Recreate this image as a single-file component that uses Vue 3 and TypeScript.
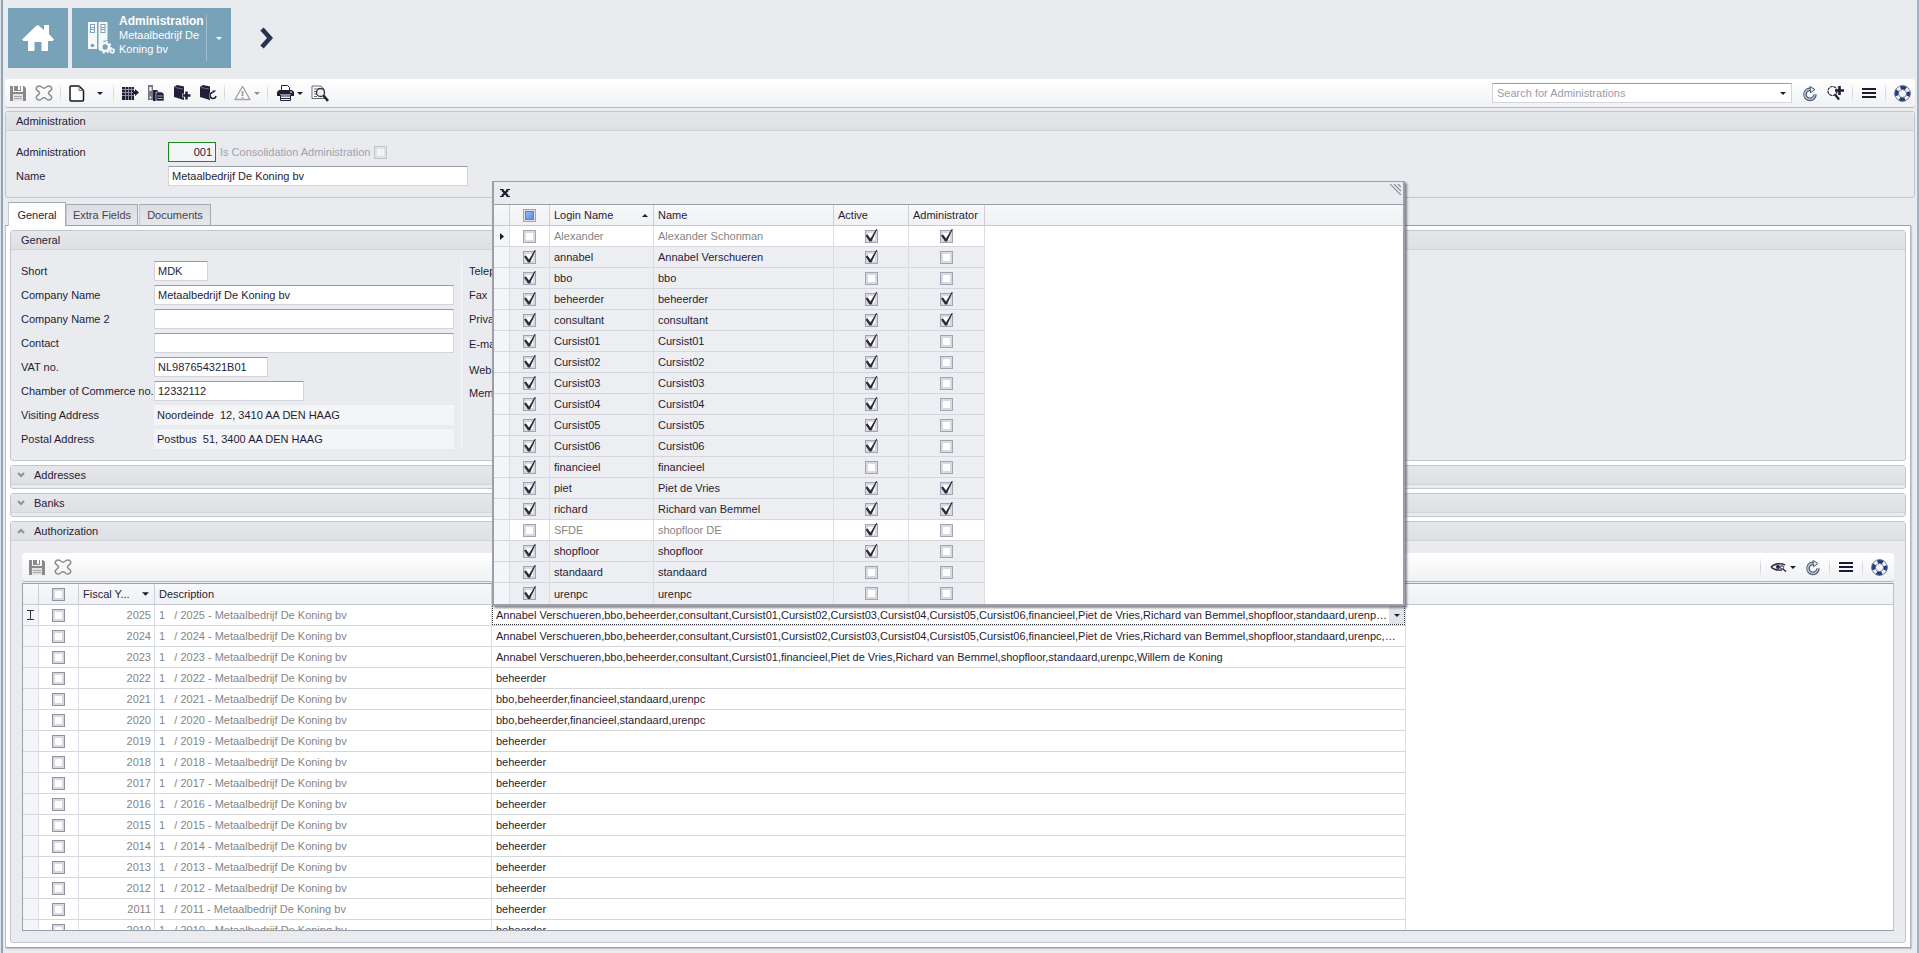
<script setup lang="ts">
import { ref } from 'vue'

interface Login {
  login: string
  name: string
  selected: boolean
  active: boolean
  admin: boolean
}

interface FiscalYear {
  year: number
  users: string
}

interface Field {
  id: string
  label: string
  value: string
  size: string
}

const login = (login: string, name: string, selected: boolean, active: boolean, admin: boolean): Login => ({
  login,
  name,
  selected,
  active,
  admin,
})

const logins = ref<Login[]>([
  login('Alexander', 'Alexander Schonman', false, true, true),
  login('annabel', 'Annabel Verschueren', true, true, false),
  login('bbo', 'bbo', true, false, false),
  login('beheerder', 'beheerder', true, true, true),
  login('consultant', 'consultant', true, true, true),
  login('Cursist01', 'Cursist01', true, true, false),
  login('Cursist02', 'Cursist02', true, true, false),
  login('Cursist03', 'Cursist03', true, true, false),
  login('Cursist04', 'Cursist04', true, true, false),
  login('Cursist05', 'Cursist05', true, true, false),
  login('Cursist06', 'Cursist06', true, true, false),
  login('financieel', 'financieel', true, false, false),
  login('piet', 'Piet de Vries', true, true, true),
  login('richard', 'Richard van Bemmel', true, true, true),
  login('SFDE', 'shopfloor DE', false, true, false),
  login('shopfloor', 'shopfloor', true, true, false),
  login('standaard', 'standaard', true, false, false),
  login('urenpc', 'urenpc', true, false, false),
])

const everyone =
  'Annabel Verschueren,bbo,beheerder,consultant,Cursist01,Cursist02,Cursist03,Cursist04,Cursist05,Cursist06,financieel,Piet de Vries,Richard van Bemmel,shopfloor,standaard,urenpc,Willem de Koning'
const office = 'bbo,beheerder,financieel,standaard,urenpc'

const usersByYear: Record<number, string> = {
  2025: everyone,
  2024: everyone,
  2023:
    'Annabel Verschueren,bbo,beheerder,consultant,Cursist01,financieel,Piet de Vries,Richard van Bemmel,shopfloor,standaard,urenpc,Willem de Koning',
  2021: office,
  2020: office,
}

const years: FiscalYear[] = Array.from({ length: 16 }, (_, i) => {
  const year = 2025 - i
  return { year, users: usersByYear[year] ?? 'beheerder' }
})

const fields = ref<Field[]>([
  { id: 'short', label: 'Short', value: 'MDK', size: 'w-short' },
  { id: 'company', label: 'Company Name', value: 'Metaalbedrijf De Koning bv', size: 'w-full' },
  { id: 'company2', label: 'Company Name 2', value: '', size: 'w-full' },
  { id: 'contact', label: 'Contact', value: '', size: 'w-full' },
  { id: 'vat', label: 'VAT no.', value: 'NL987654321B01', size: 'w-vat' },
  { id: 'coc', label: 'Chamber of Commerce no.', value: '12332112', size: 'w-coc' },
  { id: 'visiting', label: 'Visiting Address', value: 'Noordeinde  12, 3410 AA DEN HAAG', size: 'w-full flat' },
  { id: 'postal', label: 'Postal Address', value: 'Postbus  51, 3400 AA DEN HAAG', size: 'w-full flat' },
])

const contactLabels = ['Telephone', 'Fax', 'Private', 'E-mail', 'Website', 'Memo']
</script>

<template>
  <div class="app">
    <svg class="sprite" aria-hidden="true">
      <symbol id="i-save" viewBox="0 0 16 16">
        <path fill="#8a8a8a" d="M0 1h3v6h10V1h1l2 2v13H0z" />
        <path fill="#8a8a8a" d="M4 1h7v5H4z" /><path fill="#fff" d="M8 1h2v4H8z" />
        <path fill="#e2e2e2" d="M3 9h10v7H3z" /><path fill="#a8a8a8" d="M4 11h8v1H4zM4 13h8v1H4z" />
      </symbol>
      <symbol id="i-cancel" viewBox="0 0 18 16">
        <path
          fill="none"
          stroke="#8c8c8c"
          stroke-width="1.500"
          stroke-linejoin="round"
          d="M4.500 1C6 1 7.200 3.200 9 3.200S12 1 13.500 1C15.700 1 17.200 2.600 16.700 4.200C16.300 5.600 13.400 6.500 13.400 8S16.300 10.400 16.700 11.800C17.200 13.400 15.700 15 13.500 15C12 15 10.800 12.800 9 12.800S6 15 4.500 15C2.300 15 .8 13.400 1.300 11.800C1.700 10.400 4.600 9.500 4.600 8S1.700 5.600 1.300 4.200C.8 2.600 2.300 1 4.500 1Z"
        />
      </symbol>
      <symbol id="i-refresh" viewBox="0 0 16 17">
        <path fill="none" stroke="#4f5d73" stroke-width="3.600" d="M9 4.500A5 5 0 1 0 13 9.500" />
        <path fill="none" stroke="#c3cbd6" stroke-width="1.300" d="M9 4.500A5 5 0 1 0 12.800 10" />
        <path fill="#dfe4ea" stroke="#4f5d73" d="M8 1.500L13 4.500L8.500 7.800Z" />
      </symbol>
      <symbol id="i-menu" viewBox="0 0 16 12">
        <path fill="#1b1a33" d="M1 1h14v2H1zM1 5h14v2H1zM1 9h14v2H1z" />
      </symbol>
      <symbol id="i-help" viewBox="0 0 17 17">
        <circle cx="8.500" cy="8.500" r="6" fill="none" stroke="#f1f3f7" stroke-width="4" />
        <circle
          cx="8.500"
          cy="8.500"
          r="6"
          fill="none"
          stroke="#263a70"
          stroke-width="4"
          stroke-dasharray="5.600 3.825"
          stroke-dashoffset="2.800"
        />
        <circle cx="8.500" cy="8.500" r="7.800" fill="none" stroke="#64719a" stroke-width=".9" />
        <circle cx="8.500" cy="8.500" r="4" fill="none" stroke="#64719a" stroke-width=".8" />
      </symbol>
      <symbol id="i-caret" viewBox="0 0 6 3"><path fill="currentColor" d="M0 0h6L3 3z" /></symbol>
    </svg>

    <header class="tiles">
      <button class="tile home" aria-label="Home">
        <svg width="32" height="28" viewBox="0 0 32 28">
          <path fill="#fff" d="M16 1L22 6V1h5v9l5 5.500l-1.500 1.500H26V27h-6.500v-9h-7v9H6V17H1.500L0 15.500L14 2Z" />
        </svg>
      </button>
      <button class="tile admin">
        <svg width="28" height="32" viewBox="0 0 28 32">
          <path fill="#f4f8fa" d="M1 0h9v27H1zM11.500 0h9v18l-5 1v8h-4z" />
          <path fill="#78a2b8" d="M3 2h5v9H3zM13.500 2h5v9h-5z" />
          <path fill="#fff" d="M4 3h3v2H4zM4 6h3v1H4zM4 8h3v2H4zM14.500 3h3v2h-3zM14.500 6h3v1h-3zM14.500 8h3v2h-3z" />
          <circle cx="5.500" cy="23.500" r="1.800" fill="#78a2b8" />
          <circle cx="18" cy="25" r="4" fill="none" stroke="#f4f8fa" stroke-width="2.600" />
          <circle cx="18" cy="25" r="5.700" fill="none" stroke="#f4f8fa" stroke-width="1.800" stroke-dasharray="2.200 2.270" />
          <circle cx="25.200" cy="28.800" r="1.800" fill="none" stroke="#f4f8fa" stroke-width="1.500" />
          <circle cx="25.200" cy="28.800" r="2.700" fill="none" stroke="#f4f8fa" stroke-dasharray="1.400 1.420" />
        </svg>
        <span class="tile-text"><strong>Administration</strong><br />Metaalbedrijf De<br />Koning bv</span>
        <span class="tile-caret"><svg width="6" height="3"><use href="#i-caret" /></svg></span>
      </button>
      <button class="next" aria-label="Next">
        <svg width="14" height="22" viewBox="0 0 14 22">
          <path fill="none" stroke="#25344f" stroke-width="4.500" d="M2 2L10 11L2 20" />
        </svg>
      </button>
    </header>

    <nav class="toolbar">
      <button class="tb" aria-label="Save"><svg width="16" height="16"><use href="#i-save" /></svg></button>
      <button class="tb" aria-label="Cancel"><svg width="18" height="16"><use href="#i-cancel" /></svg></button>
      <span class="sep"></span>
      <button class="tb" aria-label="New">
        <svg width="16" height="17" viewBox="0 0 16 17">
          <path fill="#fff" stroke="#15151f" stroke-width="1.500" stroke-linejoin="round" d="M2 1h8l4.500 4.500V15a1 1 0 0 1-1 1H2a1 1 0 0 1-1-1V2a1 1 0 0 1 1-1z" />
          <path fill="none" stroke="#777" d="M10 1v4.500h4.500" />
        </svg>
      </button>
      <button class="tb narrow" aria-label="New options"><svg width="6" height="3"><use href="#i-caret" /></svg></button>
      <span class="sep"></span>
      <button class="tb" aria-label="Move columns">
        <svg width="17" height="15" viewBox="0 0 17 15">
          <path fill="#201f38" d="M0 1h12v13H0z" />
          <path stroke="#fff" d="M0 3.500h12M0 6.500h12M0 9.500h12M3.500 1v13M6.500 1v13M9.500 1v13" opacity=".5" />
          <path fill="#201f38" d="M11 5h2V3l4 3.500L13 10V8h-2z" />
        </svg>
      </button>
      <button class="tb" aria-label="Copy administration">
        <svg width="16" height="16" viewBox="0 0 16 16">
          <path fill="#777687" d="M0 0h5v15H0z" /><path fill="#fff" d="M1.500 2h2v4h-2zM6 4h3v3H6z" />
          <path fill="#201f38" d="M5 5h4l2 2v9H5z" /><path fill="#201f38" d="M8 7h6l2 2v7H8z" stroke="#fff" stroke-width=".6" />
          <path stroke="#a8a8b8" d="M9.500 11h5M9.500 13.500h5" /><circle cx="2.500" cy="12.500" r="1" fill="#fff" />
        </svg>
      </button>
      <button class="tb" aria-label="Add ledger">
        <svg width="17" height="16" viewBox="0 0 17 16">
          <path fill="#201f38" d="M0 2L3 0L10 1.500V15L0 12z" /><path stroke="#8886a0" stroke-width=".8" d="M1 2.500L9 4" />
          <path stroke="#fff" stroke-width="3.600" d="M12.500 6v9M8 10.500h9" /><path stroke="#201f38" stroke-width="2.600" d="M12.500 6.500v8M8.500 10.500h8" />
        </svg>
      </button>
      <button class="tb" aria-label="Refresh ledger">
        <svg width="17" height="16" viewBox="0 0 17 16">
          <path fill="#201f38" d="M0 2L3 0L10 1.500V15L0 12z" /><path stroke="#8886a0" stroke-width=".8" d="M1 2.500L9 4" />
          <circle cx="13" cy="10.500" r="4" fill="#f8f8fa" />
          <path fill="none" stroke="#201f38" stroke-width="1.500" d="M12.500 7.500A3 3 0 1 0 16 11" /><path fill="#201f38" d="M12.500 8.500V5.500h4z" />
        </svg>
      </button>
      <span class="sep"></span>
      <button class="tb split muted" aria-label="Warnings">
        <svg width="17" height="16" viewBox="0 0 17 16">
          <path fill="#fff" stroke="#a3a3a3" stroke-width="1.400" stroke-linejoin="round" d="M8.500 1.500L16 14.500H1z" />
          <path fill="#a3a3a3" d="M7.500 6h2v5h-2zM7.500 12h2v1.500h-2z" />
        </svg>
        <svg width="6" height="3"><use href="#i-caret" /></svg>
      </button>
      <span class="sep"></span>
      <button class="tb split" aria-label="Print">
        <svg width="17" height="16" viewBox="0 0 17 16">
          <path fill="#fff" stroke="#201f38" d="M4.500 5V.5h6l2 2V5" />
          <path fill="#201f38" d="M2 5h13l2 2v4h-3v-1.500H3V11H0V7zM4 10.500h9v1H4zM4 13h9v1H4z" />
          <path fill="none" stroke="#201f38" d="M3.500 10v5.500h10V10" /><path fill="#fff" d="M13 6.500h2v1h-2z" />
        </svg>
        <svg width="6" height="3"><use href="#i-caret" /></svg>
      </button>
      <button class="tb" aria-label="Preview">
        <svg width="18" height="17" viewBox="0 0 18 17">
          <path fill="#fff" stroke="#6a6a74" d="M1 1h9l3 3v9.500H1z" /><path stroke="#6a6a74" d="M3 4h5M3 6.500h3M3 9h3M3 11.500h3" />
          <circle cx="9.500" cy="7.500" r="4" fill="#eef0f3" stroke="#33333f" stroke-width="1.300" />
          <path stroke="#201f38" stroke-width="2.500" d="M12.500 10.500L17 16" />
        </svg>
      </button>
      <div class="search">
        <input type="text" aria-label="Search for Administrations" placeholder="Search for Administrations" />
        <button aria-label="Search options"><svg width="6" height="3"><use href="#i-caret" /></svg></button>
      </div>
      <button class="tb" aria-label="Refresh"><svg width="16" height="17"><use href="#i-refresh" /></svg></button>
      <button class="tb" aria-label="Advanced search">
        <svg width="18" height="16" viewBox="0 0 18 16">
          <circle cx="5.500" cy="6" r="4.500" fill="#fff" stroke="#2d2c40" stroke-width="1.200" stroke-dasharray="3 .6" />
          <path stroke="#201f38" stroke-width="2.200" d="M8 9.500L12 14.500" />
          <path stroke="#201f38" stroke-width="2.600" d="M12.500 1v9M8 5.500h9" />
        </svg>
      </button>
      <span class="sep"></span>
      <button class="tb" aria-label="Menu"><svg width="16" height="12"><use href="#i-menu" /></svg></button>
      <span class="sep"></span>
      <button class="tb" aria-label="Help"><svg width="17" height="17"><use href="#i-help" /></svg></button>
    </nav>

    <section class="group identity">
      <h2 class="group-title">Administration</h2>
      <div class="group-body">
        <div class="row">
          <label for="adm-no">Administration</label>
          <input id="adm-no" class="box code" type="text" value="001" />
          <label class="inline-label" for="consolidation">Is Consolidation Administration</label>
          <input id="consolidation" class="check soft" type="checkbox" disabled />
        </div>
        <div class="row">
          <label for="adm-name">Name</label>
          <input id="adm-name" class="box w-full" type="text" value="Metaalbedrijf De Koning bv" />
        </div>
      </div>
    </section>

    <div class="tabs" role="tablist">
      <button class="tab active" role="tab" aria-selected="true">General</button>
      <button class="tab" role="tab" aria-selected="false">Extra Fields</button>
      <button class="tab" role="tab" aria-selected="false">Documents</button>
    </div>

    <main class="page">
      <section class="group general">
        <h2 class="group-title">General</h2>
        <div class="group-body columns">
          <div class="column">
            <div v-for="f in fields" :key="f.id" class="row">
              <label :for="f.id">{{ f.label }}</label>
              <input :id="f.id" v-model="f.value" class="box" :class="f.size" type="text" />
            </div>
          </div>
          <div class="column second">
            <div v-for="c in contactLabels" :key="c" class="contact-label">{{ c }}</div>
          </div>
        </div>
      </section>

      <section v-for="name in ['Addresses', 'Banks']" :key="name" class="group collapsed">
        <h2 class="group-title">
          <button class="expander">
            <svg width="8" height="6" viewBox="0 0 8 6"><path fill="none" stroke="#8d919c" stroke-width="2" d="M1 1L4 4L7 1" /></svg>
            {{ name }}
          </button>
        </h2>
      </section>

      <section class="group authorization">
        <h2 class="group-title">
          <button class="expander">
            <svg width="8" height="6" viewBox="0 0 8 6"><path fill="none" stroke="#8d919c" stroke-width="2" d="M1 5L4 2L7 5" /></svg>
            Authorization
          </button>
        </h2>
        <div class="authorization-body">
          <nav class="toolbar inner">
            <button class="tb" aria-label="Save rows"><svg width="16" height="16"><use href="#i-save" /></svg></button>
            <button class="tb" aria-label="Cancel rows"><svg width="18" height="16"><use href="#i-cancel" /></svg></button>
            <span class="spacer"></span>
            <span class="sep"></span>
            <button class="tb split" aria-label="View">
              <svg width="17" height="10" viewBox="0 0 17 10">
                <path fill="#b9b9c6" stroke="#2b2a45" stroke-width="1.400" d="M1 5C4 1.500 10 .5 15 3M1 5C4 8 8 8.500 12 8" />
                <circle cx="8" cy="5" r="2" fill="#2b2a45" /><circle cx="12" cy="5.500" r="1.600" fill="none" stroke="#2b2a45" />
                <path stroke="#2b2a45" stroke-width="1.500" d="M13 7L16 9.500" />
              </svg>
              <svg width="6" height="3"><use href="#i-caret" /></svg>
            </button>
            <button class="tb" aria-label="Refresh rows"><svg width="16" height="17"><use href="#i-refresh" /></svg></button>
            <span class="sep"></span>
            <button class="tb" aria-label="Grid menu"><svg width="16" height="12"><use href="#i-menu" /></svg></button>
            <span class="sep"></span>
            <button class="tb" aria-label="Grid help"><svg width="17" height="17"><use href="#i-help" /></svg></button>
          </nav>

          <div class="grid years">
            <table>
              <colgroup>
                <col class="c-mark" /><col class="c-check" /><col class="c-year" /><col class="c-desc" /><col class="c-users" /><col />
              </colgroup>
              <thead>
                <tr>
                  <th></th>
                  <th class="mid"><input class="check dark" type="checkbox" aria-label="Select all years" /></th>
                  <th>
                    <span class="sorted">Fiscal Y...<svg width="7" height="4" viewBox="0 0 6 3"><path fill="#1b1a33" d="M0 0h6L3 3z" /></svg></span>
                  </th>
                  <th>Description</th>
                  <th class="open"></th>
                  <th class="rest"></th>
                </tr>
              </thead>
              <tbody>
                <tr v-for="(y, i) in years" :key="y.year">
                  <td class="mark">
                    <svg v-if="i === 0" width="7" height="10" viewBox="0 0 7 10">
                      <path fill="none" stroke="#33333f" d="M0 .5h7M0 9.500h7M3.500 0v10" />
                    </svg>
                  </td>
                  <td class="mid"><input class="check dark" type="checkbox" :aria-label="`Select ${y.year}`" /></td>
                  <td class="num grey">{{ y.year }}</td>
                  <td class="grey pre">{{ `1   / ${y.year} - Metaalbedrijf De Koning bv` }}</td>
                  <td v-if="i === 0" class="edit-cell">
                    <div class="editor">
                      <input type="text" readonly :value="y.users" aria-label="Users 2025" />
                      <button aria-label="Choose users"><svg width="6" height="3"><use href="#i-caret" /></svg></button>
                    </div>
                  </td>
                  <td v-else>{{ y.users }}</td>
                  <td class="rest"></td>
                </tr>
              </tbody>
            </table>
          </div>
        </div>
      </section>
    </main>

    <div class="popup" role="dialog" aria-label="Choose users">
      <div class="popup-bar">
        <button class="popup-close" aria-label="Close">
          <svg width="10" height="8" viewBox="0 0 10 8">
            <path fill="none" stroke="#1b1a33" stroke-width="2.200" d="M2 1L8 7M8 1L2 7" />
            <path fill="none" stroke="#1b1a33" d="M0 .5h3.500M6.500 .5H10M0 7.500h3.500M6.500 7.500H10" />
          </svg>
        </button>
        <svg class="grip" width="11" height="11" viewBox="0 0 11 11">
          <path fill="none" stroke="#8b8e98" stroke-width="1.200" d="M0 0L11 11M4 0L11 7M8 0L11 3" />
        </svg>
      </div>
      <div class="grid logins">
        <table>
          <colgroup>
            <col class="c-mark" /><col class="c-check" /><col class="c-login" /><col class="c-name" /><col class="c-active" /><col
              class="c-admin"
            /><col />
          </colgroup>
          <thead>
            <tr>
              <th></th>
              <th class="mid"><input class="check partial" type="checkbox" aria-label="Select all users" /></th>
              <th>
                <span class="sorted">Login Name<svg width="6" height="3" viewBox="0 0 6 3"><path fill="#1b1a33" d="M0 3h6L3 0z" /></svg></span>
              </th>
              <th>Name</th>
              <th>Active</th>
              <th>Administrator</th>
              <th class="rest"></th>
            </tr>
          </thead>
          <tbody>
            <tr v-for="(u, i) in logins" :key="u.login" :class="{ selected: u.selected }">
              <td class="mark">
                <svg v-if="i === 0" width="4" height="7" viewBox="0 0 4 7"><path fill="#1b1a33" d="M0 0L4 3.500L0 7z" /></svg>
              </td>
              <td class="mid"><input v-model="u.selected" class="check" type="checkbox" :aria-label="`Select ${u.login}`" /></td>
              <td :class="{ grey: !u.selected }">{{ u.login }}</td>
              <td :class="{ grey: !u.selected }">{{ u.name }}</td>
              <td class="mid"><input v-model="u.active" class="check" type="checkbox" :aria-label="`${u.login} active`" /></td>
              <td class="mid"><input v-model="u.admin" class="check" type="checkbox" :aria-label="`${u.login} administrator`" /></td>
              <td class="rest"></td>
            </tr>
          </tbody>
        </table>
      </div>
    </div>
  </div>
</template>

<style>
body {
  background: #eaebef;
}
</style>

<style scoped>
.app {
  position: relative;
  display: flex;
  flex-direction: column;
  box-sizing: border-box;
  height: 100vh;
  padding: 0 4px 5px 5px;
  overflow: hidden;
  background: #eaebef;
  box-shadow: inset 1px 0 #dfe4ea, inset 3px 0 #8fa4b5, inset -2px 0 #a3b1c0;
  color: #1f1d36;
  font: 11px/14px 'Liberation Sans', Arial, sans-serif;
}
.sprite {
  display: none;
}
button,
input {
  box-sizing: border-box;
  margin: 0;
  padding: 0;
  border: 0;
  color: inherit;
  background: none;
  font: inherit;
}
svg {
  display: block;
  flex: none;
}

/* Navigation tiles */
.tiles {
  display: flex;
  flex: none;
  align-items: center;
  gap: 4px;
  height: 60px;
  padding: 8px 3px 11px;
}
.tile {
  display: flex;
  align-items: center;
  height: 60px;
  background: #78a2b8;
  color: #fff;
}
.home {
  justify-content: center;
  width: 60px;
}
.admin {
  width: 159px;
  padding-left: 15px;
  text-align: left;
}
.tile-text {
  flex: 1;
  margin-left: 4px;
  padding-bottom: 6px;
  white-space: nowrap;
}
.tile-text strong {
  font-size: 12px;
}
.tile-caret {
  display: flex;
  align-items: center;
  justify-content: center;
  width: 24px;
  height: 46px;
  border-left: 1px solid #a5c1cf;
}
.next {
  margin-left: 21px;
  padding: 4px;
}

/* Toolbars */
.toolbar {
  display: flex;
  flex: none;
  align-items: center;
  height: 28px;
  border-bottom: 1px solid #b3b7c0;
  border-radius: 3px;
  background: linear-gradient(#fff, #f0f1f4);
}
.toolbar.inner {
  padding: 0 2px;
}
.tb {
  display: flex;
  align-items: center;
  justify-content: center;
  width: 26px;
  height: 24px;
}
.tb.narrow {
  width: 20px;
}
.tb.split {
  justify-content: flex-start;
  gap: 3px;
  width: 36px;
  padding-left: 6px;
}
.muted {
  color: #8c8c8c;
}
.sep {
  width: 1px;
  height: 19px;
  margin: 0 3px;
  background: linear-gradient(#f4f4f6, #cfd1d7, #f0f0f3);
}
.spacer {
  flex: 1;
}
.search {
  display: flex;
  box-sizing: border-box;
  width: 300px;
  height: 20px;
  margin: 0 5px 0 auto;
  border: 1px solid #d3d5dc;
  border-top-color: #9a9caa;
  background: #fff;
}
.search input {
  flex: 1;
  min-width: 0;
  padding-left: 4px;
}
.search input::placeholder {
  color: #9a9ca8;
  opacity: 1;
}
.search button {
  display: flex;
  align-items: center;
  justify-content: center;
  width: 16px;
}

/* Groups and form fields */
.group {
  flex: none;
  border: 1px solid #c3c6ce;
  border-radius: 3px;
  background: #eaebef;
}
.group-title {
  display: flex;
  align-items: center;
  height: 18px;
  margin: 0;
  padding-left: 10px;
  border-bottom: 1px solid #d2d4da;
  background: linear-gradient(#e6e7eb, #dfe0e4);
  font: inherit;
}
.expander {
  display: flex;
  align-items: center;
  gap: 9px;
}
.collapsed .group-title,
.authorization > .group-title {
  padding-left: 6px;
}
.collapsed {
  padding-bottom: 3px;
}
.group-body {
  padding: 9px 10px;
}
.row {
  display: flex;
  align-items: center;
  height: 24px;
}
.row > label:first-child {
  flex: none;
  width: 133px;
  white-space: nowrap;
}
.identity {
  margin-top: 3px;
}
.identity .row > label:first-child {
  width: 152px;
}
.box {
  height: 20px;
  padding: 0 3px;
  border: 1px solid #d3d5dc;
  border-top-color: #9a9caa;
  background: #fff;
}
.box.flat {
  border-color: #f4f5f7;
  background: #f4f5f7;
  padding-left: 2px;
}
.box.code {
  width: 48px;
  border-color: #1d8a1d;
  background: #f4f5f7;
  text-align: right;
}
.w-short {
  width: 54px;
}
.w-vat {
  width: 114px;
}
.w-coc {
  width: 150px;
}
.w-full {
  width: 300px;
}
.inline-label {
  margin: 0 4px;
  color: #a0a2ae;
}

/* Tabs */
.tabs {
  display: flex;
  flex: none;
  align-items: flex-end;
  height: 23px;
  margin-top: 4px;
  padding-left: 3px;
}
.tab {
  width: 72px;
  height: 21px;
  border: 1px solid #a6a8b4;
  border-bottom: 0;
  border-left-color: #c9cbd2;
  background: linear-gradient(#dddee3, #e6e7eb);
  color: #44434f;
}
.tab + .tab {
  margin-right: 1px;
}
.tab.active {
  position: relative;
  z-index: 1;
  width: 58px;
  height: 24px;
  margin-bottom: -1px;
  background: #fff;
  color: inherit;
}
.page {
  display: flex;
  flex: 1;
  flex-direction: column;
  gap: 4px;
  min-height: 0;
  margin-right: 4px;
  padding: 4px;
  border: 1px solid #9c9eaa;
  border-left-color: #c0c2ca;
  border-right-color: #b4b6c0;
  background: #fff;
  box-shadow: 1px 1px 1px #c6c8ce;
}
.columns {
  display: flex;
}
.second {
  display: flex;
  flex-direction: column;
  margin-left: 7px;
  padding-left: 7px;
  border-left: 1px solid #f6f6f9;
}
.contact-label {
  height: 24px;
  line-height: 24px;
}
.contact-label:nth-child(n + 4) {
  height: 26px;
  line-height: 26px;
}
.contact-label:nth-child(6) {
  height: 20px;
  line-height: 20px;
}
.authorization {
  display: flex;
  flex: 1;
  flex-direction: column;
  min-height: 0;
}
.authorization-body {
  display: flex;
  flex: 1;
  flex-direction: column;
  min-height: 0;
  padding: 12px 11px 11px;
}

/* Grids */
.grid {
  overflow: hidden;
  background: #fff;
}
.years {
  flex: 1;
  min-height: 0;
  margin-top: 1px;
  border: 1px solid #9c9eaa;
  border-right-color: #c0c2cc;
}
table {
  width: 100%;
  table-layout: fixed;
  border-collapse: separate;
  border-spacing: 0;
}
th,
td {
  box-sizing: border-box;
  height: 21px;
  padding: 0 4px;
  overflow: hidden;
  border-right: 1px solid #dcdde3;
  border-bottom: 1px solid #d6d7dd;
  font-weight: 400;
  line-height: 18px;
  text-align: left;
  text-overflow: ellipsis;
  white-space: nowrap;
}
th {
  border-right-color: #cdced8;
  border-bottom-color: #c6c8d2;
  background: linear-gradient(#f7f8f9, #f0f1f4);
}
th.open,
th.rest {
  border-right: 0;
}
td.rest {
  border: 0;
}
td:first-child {
  background: #f4f5f8;
}
.c-mark {
  width: 16px;
}
.c-check {
  width: 40px;
}
.c-year {
  width: 76px;
}
.c-desc {
  width: 337px;
}
.c-users {
  width: 914px;
}
.c-login {
  width: 104px;
}
.c-name {
  width: 180px;
}
.c-active {
  width: 75px;
}
.c-admin {
  width: 76px;
}
.mid,
.mark {
  padding: 0;
  text-align: center;
}
.mid .check {
  margin: 0 auto;
}
.mark svg {
  margin: 0 auto;
}
.num {
  text-align: right;
  padding-right: 3px;
}
.grey {
  color: #858585;
}
.pre {
  white-space: pre;
}
.sorted {
  display: flex;
  align-items: center;
  justify-content: space-between;
  padding-right: 1px;
}
.selected td {
  background: #edeef1;
}
.selected td:first-child {
  background: #f4f5f8;
}
.selected td.rest {
  background: #fff;
}
.edit-cell {
  padding: 0;
}
.editor {
  display: flex;
  box-sizing: border-box;
  height: 20px;
  border: 1px dotted #33333f;
}
.editor input {
  flex: 1;
  min-width: 0;
  padding: 0 1px 0 3px;
  text-overflow: ellipsis;
}
.editor button {
  display: flex;
  align-items: center;
  justify-content: center;
  width: 15px;
  background: #e2e3e8;
}

/* Check boxes */
.check {
  position: relative;
  display: block;
  width: 13px;
  height: 13px;
  border: 1px solid #a2a4b1;
  background: #fff;
  box-shadow: inset 0 0 0 2px #d9dae0;
  appearance: none;
}
.check.dark {
  border-color: #8f919e;
}
.check.soft {
  border-color: #c4c6cd;
  background: #f3f3f6;
  box-shadow: inset 0 0 0 2px #e0e1e6;
}
.check.partial {
  background: linear-gradient(135deg, #a9c4f8, #4f7fe0);
  box-shadow: inset 0 0 0 1px #dfe3ee, inset 0 0 0 2px #5b7fd0;
}
.check:checked::before {
  position: absolute;
  top: -2px;
  left: 0;
  width: 12px;
  height: 14px;
  background: #2b2a3c;
  clip-path: polygon(0 7px, 2px 6px, 5px 10px, 11px 0, 12px 0, 6px 13px, 4px 13px);
  content: '';
}

/* User picker */
.popup {
  position: absolute;
  top: 181px;
  left: 492px;
  box-sizing: border-box;
  width: 913px;
  border: 1px solid #9c9eaa;
  border-right-width: 2px;
  border-bottom-width: 2px;
  border-left-width: 2px;
  background: #eaebef;
  box-shadow: 2px 2px 2px rgba(60, 60, 70, 0.6);
}
.popup-bar {
  display: flex;
  align-items: center;
  justify-content: space-between;
  height: 22px;
  padding: 0 2px 0 6px;
  border-bottom: 1px solid #9c9eaa;
}
.grip {
  align-self: flex-start;
  margin-top: 2px;
}
.logins tbody tr:last-child td {
  border-bottom: 0;
}
</style>
